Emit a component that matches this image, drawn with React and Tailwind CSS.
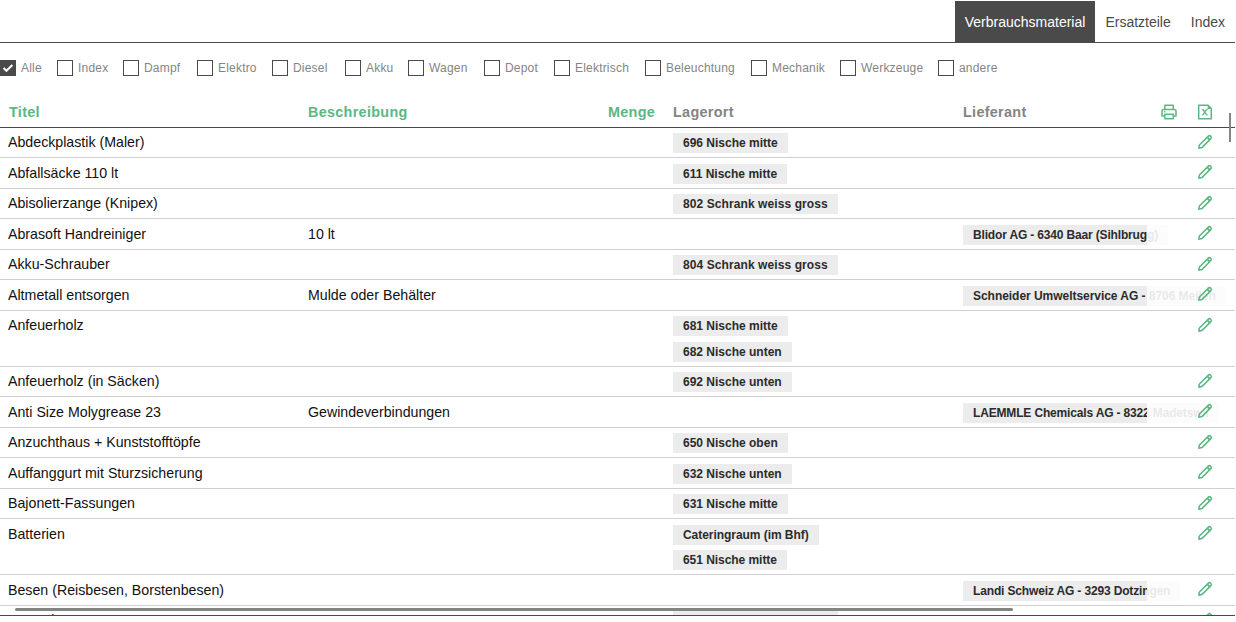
const tabs = [
  { name: "Verbrauchsmaterial", active: true },
  { name: "Ersatzteile", active: false },
  { name: "Index", active: false },
];

const filters = [
  { name: "Alle", box: "w-[57px]", checked: true },
  { name: "Index", box: "w-[66px]" },
  { name: "Dampf", box: "w-[74px]" },
  { name: "Elektro", box: "w-[75px]" },
  { name: "Diesel", box: "w-[73px]" },
  { name: "Akku", box: "w-[63px]" },
  { name: "Wagen", box: "w-[76px]" },
  { name: "Depot", box: "w-[70px]" },
  { name: "Elektrisch", box: "w-[91px]" },
  { name: "Beleuchtung", box: "w-[106px]" },
  { name: "Mechanik", box: "w-[89px]" },
  { name: "Werkzeuge", box: "w-[98px]" },
  { name: "andere", box: "w-[70px]" },
];

const items = [
  { title: "Abdeckplastik (Maler)", places: ["696 Nische mitte"] },
  { title: "Abfallsäcke 110 lt", places: ["611 Nische mitte"] },
  { title: "Abisolierzange (Knipex)", places: ["802 Schrank weiss gross"], tracking: "tracking-[0.09px]" },
  { title: "Abrasoft Handreiniger", description: "10 lt", supplier: "Blidor AG - 6340 Baar (Sihlbrugg)", tracking: "tracking-[-0.16px]" },
  { title: "Akku-Schrauber", places: ["804 Schrank weiss gross"], tracking: "tracking-[0.09px]" },
  { title: "Altmetall entsorgen", description: "Mulde oder Behälter", supplier: "Schneider Umweltservice AG - 8706 Meilen", tracking: "tracking-[-0.04px]" },
  { title: "Anfeuerholz", places: ["681 Nische mitte", "682 Nische unten"] },
  { title: "Anfeuerholz (in Säcken)", places: ["692 Nische unten"] },
  { title: "Anti Size Molygrease 23", description: "Gewindeverbindungen", supplier: "LAEMMLE Chemicals AG - 8322 Madetswil", tracking: "tracking-[-0.16px]" },
  { title: "Anzuchthaus + Kunststofftöpfe", places: ["650 Nische oben"] },
  { title: "Auffanggurt mit Sturzsicherung", places: ["632 Nische unten"] },
  { title: "Bajonett-Fassungen", places: ["631 Nische mitte"] },
  { title: "Batterien", places: ["Cateringraum (im Bhf)", "651 Nische mitte"], tracking: "tracking-[-0.05px]" },
  { title: "Besen (Reisbesen, Borstenbesen)", supplier: "Landi Schweiz AG - 3293 Dotzingen", tracking: "tracking-[-0.15px]" },
  { title: "Besteck", places: ["803 Schrank weiss gross"], tracking: "tracking-[0.09px]" },
];

const columns = "grid grid-cols-[300px_300px_65px_290px_184px_1fr] pl-2";

const PencilIcon = () => (
  <svg viewBox="0 0 16 16" className="block size-4" fill="none" stroke="#5cb783" strokeWidth="1.5" strokeLinejoin="round">
    <path d="M1.8 14.2 2.4 11 11.4 2.1a1.5 1.5 0 0 1 2.1 0l.4.4a1.5 1.5 0 0 1 0 2.1L4.9 13.6Z" />
    <path d="m10.6 3.6 1.9 1.9" strokeWidth="1.9" />
  </svg>
);

const PrinterIcon = () => (
  <svg viewBox="0 0 16 16" className="block size-4" fill="none" stroke="#5cb783" strokeWidth="1.5" strokeLinejoin="round">
    <path d="M3.8 5.5V1.3h8.4v4.2M3.8 12H1V7a1.5 1.5 0 0 1 1.5-1.5h11A1.5 1.5 0 0 1 15 7v5h-2.8" />
    <path d="M3.8 10.2h8.4v4.5H3.8ZM3 7.8h1.3" />
  </svg>
);

const ExcelIcon = () => (
  <svg viewBox="0 0 16 16" className="block size-4" fill="none" stroke="#5cb783" strokeWidth="1.5">
    <path d="M1.7 1.2h9.3l3.3 3.3v10.3H1.7Z" />
    <path d="M10.6 1v3.9h3.9Z" fill="#5cb783" stroke="none" />
    <path d="m5.9 5.4 3.8 5.4M9.7 5.4l-3.8 5.4" strokeWidth="1.4" />
    <path d="M5 5.4h1.8M9 5.4h1.8M5 10.9h1.8M9 10.9h1.8" strokeWidth="0.9" />
  </svg>
);

const Tag = ({ children }) => (
  <span className="block h-5 w-max bg-[#ececec] px-2.5 text-[12px] leading-5 font-bold whitespace-nowrap text-[#2b2b2b]">{children}</span>
);

// Names longer than the column run on under a faded copy, next to the edit icon
const Supplier = ({ name }) => (
  <div className="relative w-[184px]">
    <div className="w-max opacity-10">
      <Tag>{name}</Tag>
    </div>
    <div className="absolute inset-y-0 left-0 w-[184px] overflow-hidden bg-white">
      <Tag>{name}</Tag>
    </div>
  </div>
);

const Row = ({ item }) => (
  <div className={`${columns} shrink-0 border-b border-[#cfcfcf] ${item.places?.length > 1 ? "h-[56px]" : "h-[30.5px]"}`}>
    <span className="pt-[4.2px] text-[14.2px] leading-5">{item.title}</span>
    <span className="pt-[4.2px] text-[14.2px] leading-5">{item.description}</span>
    <span />
    <div className={`flex flex-col gap-[5.6px] pt-[5.2px] ${item.tracking || ""}`}>
      {item.places?.map((place) => (
        <Tag key={place}>{place}</Tag>
      ))}
    </div>
    <div className={`pt-[5.2px] ${item.tracking || ""}`}>{item.supplier && <Supplier name={item.supplier} />}</div>
    <div className="relative pt-[6px] pl-[50px]">
      <PencilIcon />
    </div>
  </div>
);

const App = () => (
  <div className="relative h-[622px] w-[1236px] overflow-hidden bg-white font-['Liberation_Sans',Arial,sans-serif] text-[#111]">
    <div className="flex h-[616px] w-[1235px] flex-col overflow-hidden border-b border-[#4a4a4a]">
      <nav className="flex h-[43px] shrink-0 justify-end border-b border-[#4a4a4a] pt-px">
        {tabs.map((tab) => (
          <button
            key={tab.name}
            type="button"
            className={`h-[41px] px-2.5 text-[14px] leading-[43px] ${tab.active ? "bg-[#4a4a4a] text-white" : "text-[#4a4a4a]"}`}
          >
            {tab.name}
          </button>
        ))}
      </nav>

      <div className="flex h-[50px] shrink-0 items-center">
        {filters.map((filter) => (
          <label key={filter.name} className={`${filter.box} flex shrink-0 items-center text-[12px] tracking-[0.2px] text-[#848484]`}>
            {filter.checked ? (
              <span className="mr-[5px] flex h-4 w-4 shrink-0 items-center bg-[#4a4a4a]">
                <svg viewBox="0 0 16 16" className="size-4" fill="none" stroke="white" strokeWidth="2">
                  <path d="m3.6 8 2.8 2.8L12.4 5" />
                </svg>
              </span>
            ) : (
              <span className="mr-[5px] size-4 shrink-0 border border-[#4a4a4a]" />
            )}
            {filter.name}
          </label>
        ))}
      </div>

      <div className={`${columns} h-[34.9px] shrink-0 items-center border-b border-[#4a4a4a] pt-1 text-[14.4px] leading-5 font-bold tracking-[0.3px] text-[#5cb783]`}>
        <span className="pl-px">Titel</span>
        <span>Beschreibung</span>
        <span>Menge</span>
        <span className="text-[#848484]">Lagerort</span>
        <span className="text-[#848484]">Lieferant</span>
        <span className="flex gap-5 pl-[14px]">
          <PrinterIcon />
          <ExcelIcon />
        </span>
      </div>

      {items.map((item) => (
        <Row key={item.title} item={item} />
      ))}
    </div>

    <div className="absolute top-[608px] left-[15px] h-[3px] w-[998px] rounded-full bg-[#848484]" />
    <div className="absolute top-[113px] left-[1229px] h-[29px] w-[2px] bg-[#848484]" />
  </div>
);

export default App;
